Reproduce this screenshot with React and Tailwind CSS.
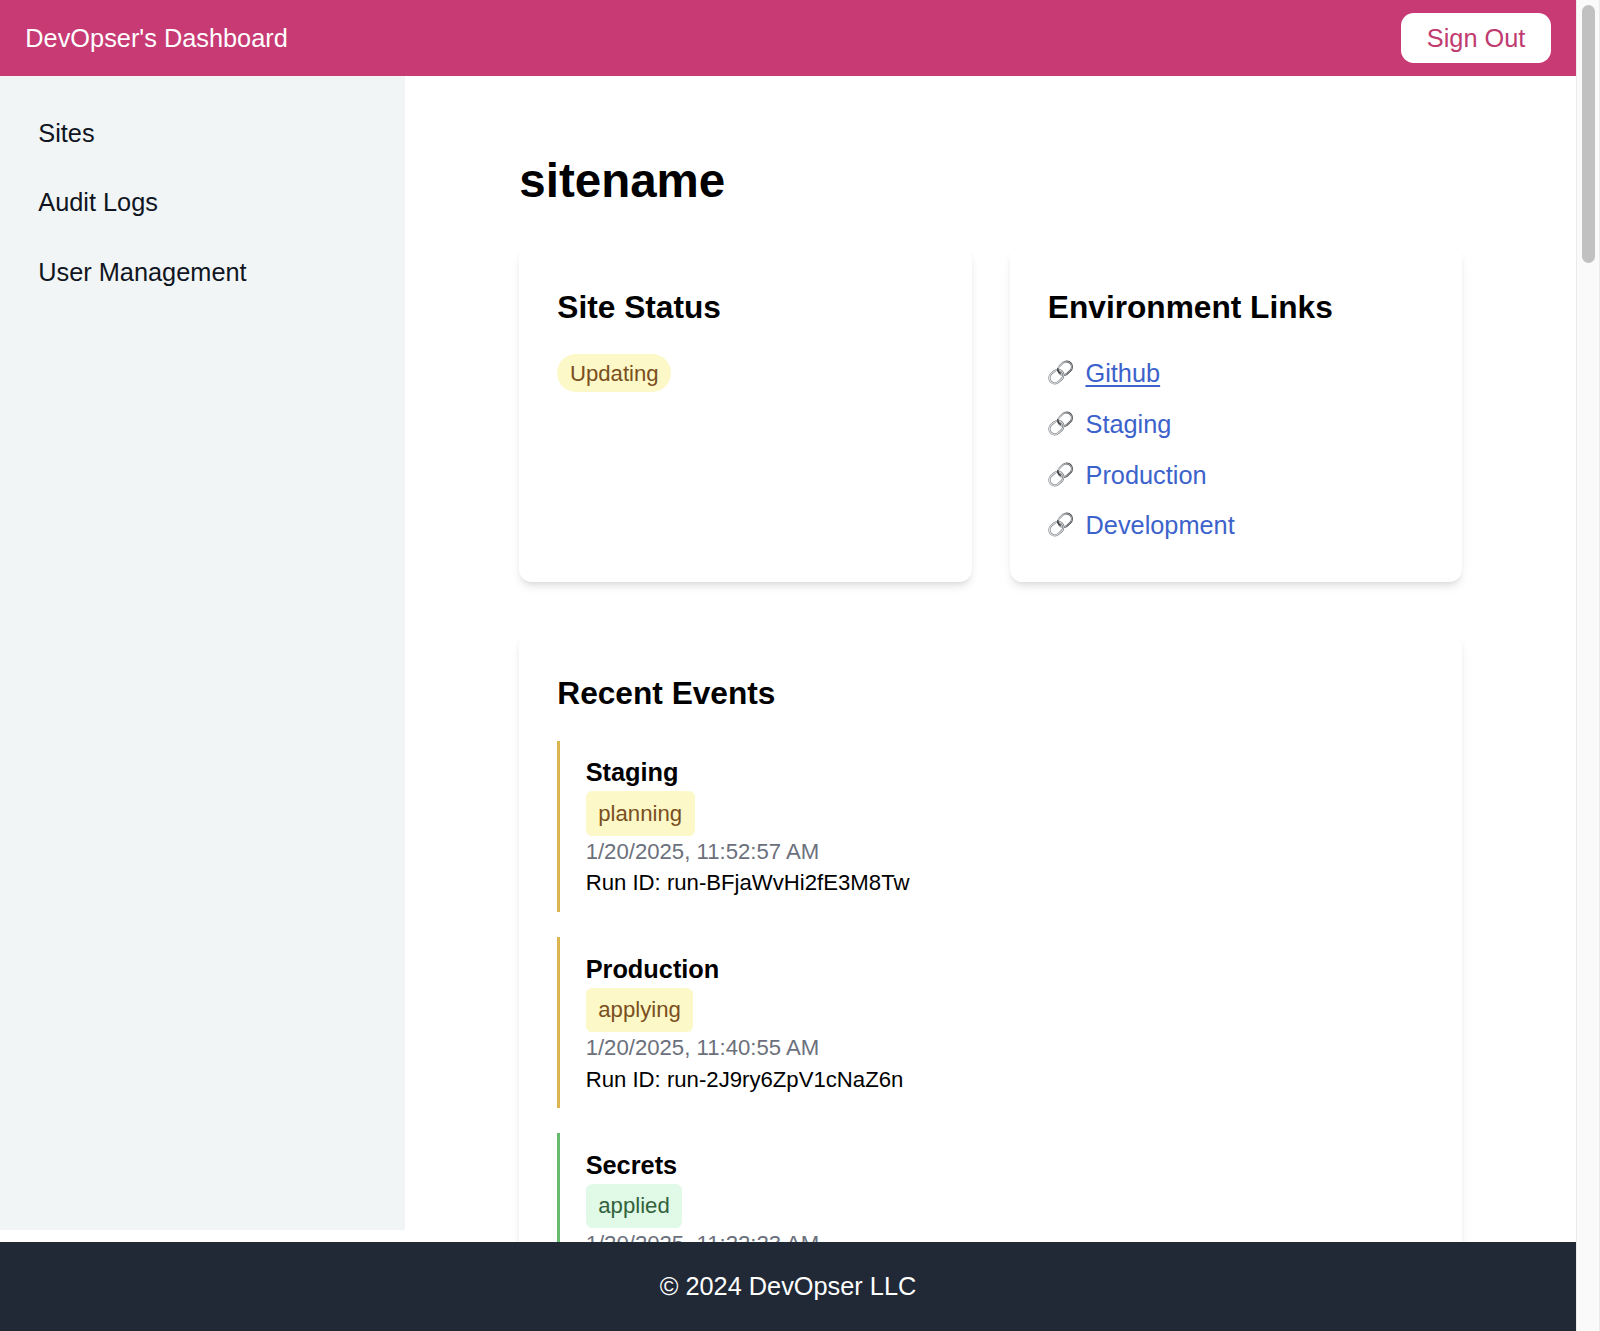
const navItems = ["Sites", "Audit Logs", "User Management"];

const links = [
    { name: "Github", active: true },
    { name: "Staging" },
    { name: "Production" },
    { name: "Development" },
];

const events = [
    { env: "Staging", status: "planning", time: "1/20/2025, 11:52:57 AM", runId: "run-BFjaWvHi2fE3M8Tw" },
    { env: "Production", status: "applying", time: "1/20/2025, 11:40:55 AM", runId: "run-2J9ry6ZpV1cNaZ6n" },
    { env: "Secrets", status: "applied", time: "1/20/2025, 11:22:23 AM" },
];

function LinkIcon() {
    return (
        <svg viewBox="0 0 26 26" className="mt-[-1px] h-[25px] w-[25px] shrink-0" fill="none">
            <defs>
                <linearGradient id="upper" x1="0" y1="0" x2="1" y2="0.6">
                    <stop offset="0" stopColor="#b4b7ba" />
                    <stop offset="0.45" stopColor="#94979a" />
                    <stop offset="0.75" stopColor="#3c3f42" />
                    <stop offset="1" stopColor="#4a4d50" />
                </linearGradient>
                <linearGradient id="lower" x1="0" y1="0" x2="1" y2="1">
                    <stop offset="0" stopColor="#66696c" />
                    <stop offset="0.5" stopColor="#85888b" />
                    <stop offset="1" stopColor="#4c4f52" />
                </linearGradient>
            </defs>
            {/* upper ring */}
            <g transform="rotate(-42 17.7 8.6)">
                <rect x="9.9" y="3" width="15.6" height="11.2" rx="5.6" stroke="url(#upper)" strokeWidth="2.1" />
                <rect x="10.1" y="3.2" width="15.2" height="10.8" rx="5.4" stroke="#d4d7da" strokeWidth="0.7" />
            </g>
            {/* lower ring */}
            <g transform="rotate(-42 8.7 17.2)">
                <rect x="0.9" y="11.6" width="15.6" height="11.2" rx="5.6" stroke="url(#lower)" strokeWidth="2.2" />
                <rect x="0.9" y="11.6" width="15.6" height="11.2" rx="5.6" stroke="#e4e7ea" strokeWidth="1.1" />
            </g>
            <path d="M10.4 8.6c-.5 2.2.5 4.3 2.9 5.4" stroke="#35383b" strokeWidth="1.6" />
        </svg>
    );
}

function Card({ title, children }) {
    return (
        <section className="rounded-[12.67px] bg-white p-[38px] shadow-[0_6.33px_9.5px_-1.58px_rgba(0,0,0,0.08),0_3.17px_6.33px_-3.17px_rgba(0,0,0,0.1)]">
            <h2 className="mb-[25.33px] text-[31.67px] leading-[44.33px] font-bold">{title}</h2>
            {children}
        </section>
    );
}

function EventRow({ env, status, time, runId }) {
    const done = status === "applied";
    return (
        <li
            className={`border-l-3 py-[12.67px] pl-[25.33px] text-[22.17px] leading-[31.67px] ${
                done ? "border-[#66bb6e]" : "border-[#dbb54f]"
            }`}
        >
            <h3 className="text-[25.33px] leading-[38px] font-bold">{env}</h3>
            <div
                className={`w-fit rounded-[6.33px] px-[12.67px] py-[6.33px] ${
                    done ? "bg-[#e0fae7] text-[#32623b]" : "bg-[#fcf8c7] text-[#7a4f20]"
                }`}
            >
                {status}
            </div>
            <p className="text-[#6c707c]">{time}</p>
            {runId && <p>Run ID: {runId}</p>}
        </li>
    );
}

export default function App() {
    return (
        <div className="flex h-[1331px] w-[1600px] overflow-hidden bg-white font-['Liberation_Sans',Arial,sans-serif] text-[25.33px] leading-[38px] text-black">
            <div className="flex min-w-0 flex-1 flex-col">
                <header className="flex h-[76px] shrink-0 items-center justify-between bg-[#c83a74] px-[25.33px] text-white">
                    <span>DevOpser's Dashboard</span>
                    <button className="rounded-[12.67px] bg-white px-[25.33px] py-[6.33px] text-[#c03b70]">
                        Sign Out
                    </button>
                </header>

                <div className="flex min-h-0 flex-1">
                    <aside className="mb-[12.67px] w-[405px] shrink-0 bg-[#f1f5f6] px-[25.6px] pt-[25px]">
                        <nav className="flex flex-col gap-[6.33px] text-[#10151f]">
                            {navItems.map((item) => (
                                <a key={item} href="#" className="p-[12.67px]">
                                    {item}
                                </a>
                            ))}
                        </nav>
                    </aside>

                    <main className="min-w-0 flex-1 overflow-hidden pt-[75.7px] pr-[113.6px] pl-[114.3px]">
                        <h1 className="mb-[38px] text-[47.5px] leading-[57px] font-bold">sitename</h1>

                        <div className="mb-[50.67px] grid grid-cols-2 gap-[38px]">
                            <Card title="Site Status">
                                <div className="w-fit rounded-full bg-[#fcf8c7] px-[12.67px] py-[3.17px] text-[22.17px] leading-[31.67px] text-[#7a4f20]">
                                    Updating
                                </div>
                            </Card>
                            <Card title="Environment Links">
                                <ul className="flex flex-col gap-[12.67px]">
                                    {links.map(({ name, active }) => (
                                        <li key={name} className="flex items-center gap-[12.67px]">
                                            <LinkIcon />
                                            <a
                                                href="#"
                                                className={`text-[#3c62cb] ${
                                                    active ? "underline decoration-2 underline-offset-[3px]" : ""
                                                }`}
                                            >
                                                {name}
                                            </a>
                                        </li>
                                    ))}
                                </ul>
                            </Card>
                        </div>

                        <Card title="Recent Events">
                            <ul className="flex flex-col gap-[25.33px]">
                                {events.map((event) => (
                                    <EventRow key={event.env} {...event} />
                                ))}
                            </ul>
                        </Card>
                    </main>
                </div>

                <footer className="flex h-[88.67px] shrink-0 items-center justify-center bg-[#212936] pb-[2px] text-white">
                    © 2024 DevOpser LLC
                </footer>
            </div>

            {/* scrollbar */}
            <div className="w-6 shrink-0 border-x border-[#ebebeb] bg-[#fafafa] pt-[5px] pl-[5px]">
                <div className="h-[258px] w-[13px] rounded-full bg-[#c1c1c1]" />
            </div>
        </div>
    );
}
